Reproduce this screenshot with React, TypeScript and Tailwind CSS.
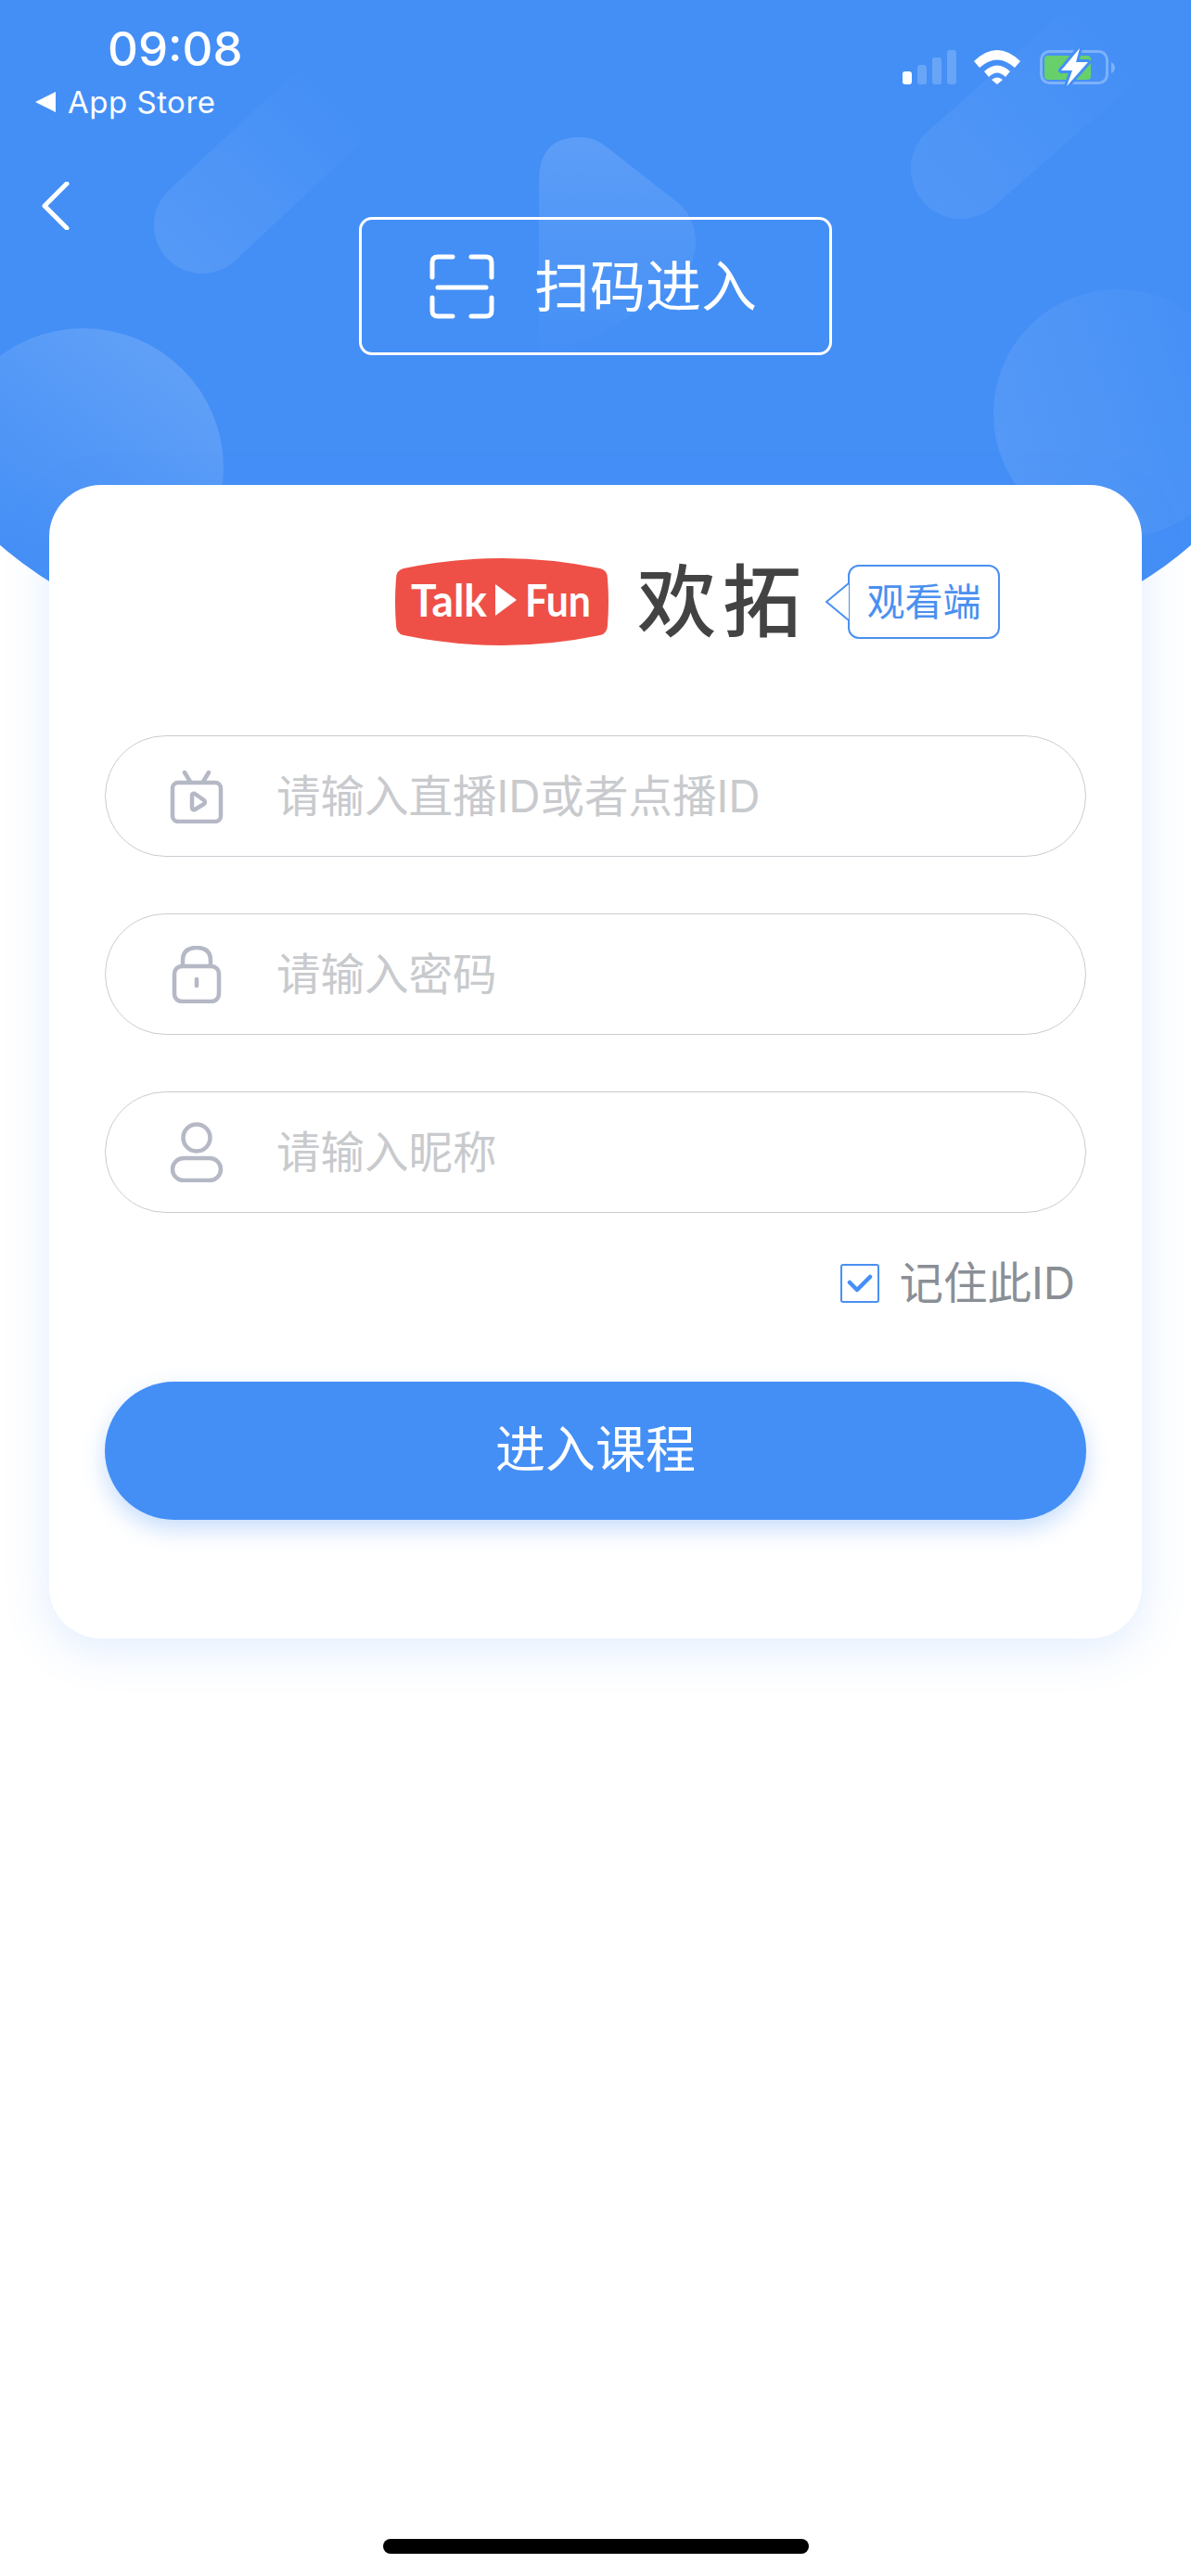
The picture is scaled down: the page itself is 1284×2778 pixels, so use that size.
import React from 'react'

const sans = "font-['Inter','Noto_Sans_CJK_SC',sans-serif]"

function HeaderBg() {
  return (
    <svg className="absolute left-0 top-0" width="1284" height="760" viewBox="0 0 1284 760">
      <defs>
        <linearGradient id="capLeft" gradientUnits="userSpaceOnUse" x1="190" y1="270" x2="360" y2="100">
          <stop offset="0" stopColor="#fff" stopOpacity="0.09" />
          <stop offset="1" stopColor="#fff" stopOpacity="0" />
        </linearGradient>
        <linearGradient id="capRight" gradientUnits="userSpaceOnUse" x1="1000" y1="215" x2="1200" y2="40">
          <stop offset="0" stopColor="#fff" stopOpacity="0.07" />
          <stop offset="1" stopColor="#fff" stopOpacity="0" />
        </linearGradient>
        <linearGradient id="tri" x1="0.5" y1="0" x2="0.5" y2="1">
          <stop offset="0" stopColor="#fff" stopOpacity="0.13" />
          <stop offset="1" stopColor="#fff" stopOpacity="0" />
        </linearGradient>
        <linearGradient id="circLeft" x1="0.8" y1="0.1" x2="0.25" y2="0.85">
          <stop offset="0" stopColor="#fff" stopOpacity="0.15" />
          <stop offset="1" stopColor="#fff" stopOpacity="0" />
        </linearGradient>
        <linearGradient id="circRight" x1="0" y1="0.6" x2="1" y2="0.3">
          <stop offset="0" stopColor="#fff" stopOpacity="0.09" />
          <stop offset="1" stopColor="#fff" stopOpacity="0" />
        </linearGradient>
        <clipPath id="dome">
          <ellipse cx="642" cy="443" rx="720" ry="320" />
          <rect x="-78" y="0" width="1440" height="443" />
        </clipPath>
      </defs>
      <g clipPath="url(#dome)">
        <rect width="1284" height="760" fill="#448ff6" />
        <circle cx="90" cy="505" r="151" fill="url(#circLeft)" />
        <circle cx="1205" cy="446" r="134" fill="url(#circRight)" />
        <path d="M218 243 L345 124" stroke="url(#capLeft)" strokeWidth="104" strokeLinecap="round" fill="none" />
        <path d="M1036 182 L1180 55" stroke="url(#capRight)" strokeWidth="108" strokeLinecap="round" fill="none" />
        <path d="M581 195 Q581 148 625 148 Q640 148 652 157 L735 222 Q750 238 750 262 Q750 290 718 317 L640 365 L581 385Z" fill="url(#tri)" />
      </g>
    </svg>
  )
}

function StatusIcons() {
  return (
    <svg className="overflow-visible" width="236" height="40" viewBox="0 0 236 40">
      <rect x="3" y="24" width="10" height="14" rx="3" fill="#fff" />
      <rect x="19" y="17" width="10" height="21" rx="3" fill="#fff" opacity="0.2" />
      <rect x="35" y="9" width="10" height="29" rx="3" fill="#fff" opacity="0.2" />
      <rect x="51" y="1" width="10" height="37" rx="3" fill="#fff" opacity="0.2" />
      <path d="M80 13 Q105 -11 130 13 L124 20 Q105 3 86 20Z" fill="#fff" />
      <path d="M91 24 Q105 11 119 24 L114 30 Q105 21 96 30Z" fill="#fff" />
      <path d="M99 33 Q105 28 111 33 L105 38Z" fill="#fff" />
      <rect x="152.5" y="2.5" width="71" height="34" rx="9" fill="none" stroke="#fff" strokeOpacity="0.3" strokeWidth="3" />
      <rect x="156" y="7" width="50" height="26" rx="4" fill="#67d06a" />
      <path d="M228 14 Q232 16 232 20 Q232 24 228 26Z" fill="#fff" opacity="0.3" />
      <path d="M194 -1 L174 23 L186 23 L180 40 L203 14 L190 14Z" fill="#fff" stroke="#448ff6" strokeWidth="6" strokeLinejoin="round" paintOrder="stroke" />
    </svg>
  )
}

function TvIcon() {
  return (
    <svg width="58" height="58" viewBox="0 0 58 58" fill="none" stroke="#b5b8c5" strokeWidth="4.5" strokeLinecap="round" strokeLinejoin="round">
      <rect x="3" y="14" width="52" height="42" rx="6" />
      <path d="M16 3 L22 13 M42 3 L36 13" />
      <path d="M24 28 Q24 25 27 26 L37 33 Q39 35 37 37 L27 43 Q24 44 24 41Z" />
    </svg>
  )
}

function LockIcon() {
  return (
    <svg width="58" height="62" viewBox="0 0 58 62" fill="none" stroke="#b5b8c5" strokeWidth="4.5" strokeLinecap="round" strokeLinejoin="round">
      <rect x="5" y="22" width="48" height="38" rx="8" />
      <path d="M14 22 V16 Q14 2 29 2 Q44 2 44 16 V22" />
      <path d="M29 36 V43" />
    </svg>
  )
}

function UserIcon() {
  return (
    <svg width="58" height="65" viewBox="0 0 58 65" fill="none" stroke="#b5b8c5" strokeWidth="4.5" strokeLinejoin="round">
      <circle cx="29" cy="17" r="14.5" />
      <rect x="3" y="39" width="52" height="24" rx="12" />
    </svg>
  )
}

function Field({ icon, text }: { icon: React.ReactNode; text: string }) {
  return (
    <div className="flex h-[131px] items-center rounded-full border border-[#c8ccd1] bg-white pl-[69px]">
      <div className="flex w-[58px] justify-center">{icon}</div>
      <span className="ml-[57px] text-[47.5px] leading-none text-[#c8cacd]">{text}</span>
    </div>
  )
}

function Logo() {
  return (
    <svg width="232" height="94" viewBox="0 0 232 94">
      <path d="M10 11 Q116 -11 222 11 Q230 13 230 22 Q232 47 230 72 Q230 81 222 83 Q116 105 10 83 Q2 81 2 72 Q0 47 2 22 Q2 13 10 11Z" fill="#ee5047" />
      <text x="18" y="63" fill="#fff" fontFamily="Lato, sans-serif" fontSize="48" fontWeight="700" textLength="82" lengthAdjust="spacingAndGlyphs">Talk</text>
      <path d="M109 28 L132 45 L109 62Z" fill="#fff" />
      <text x="141" y="63" fill="#fff" fontFamily="Lato, sans-serif" fontSize="48" fontWeight="700" textLength="71" lengthAdjust="spacingAndGlyphs">Fun</text>
    </svg>
  )
}

export default function App() {
  return (
    <div className={`relative h-[2778px] w-[1284px] overflow-hidden bg-white ${sans}`}>
      <HeaderBg />
      <div className="relative">
        {/* status bar */}
        <div className="flex h-[136px] items-start justify-between pl-[38px] pr-[78px]">
          <div>
            <div className="ml-[78px] mt-[23px] text-[51px] font-medium leading-[60px] text-white">09:08</div>
            <div className="mt-[7px] flex items-center gap-[13px] text-[33px] font-normal leading-[40px] tracking-[0.5px] text-white">
              <svg width="22" height="22" viewBox="0 0 22 22"><path d="M22 0 V22 L0 11Z" fill="#fff" /></svg>
              App Store
            </div>
          </div>
          <div className="mt-[53px]"><StatusIcons /></div>
        </div>

        {/* back + scan button */}
        <div className="pl-[45px] pt-[60px]">
          <svg width="30" height="52" viewBox="0 0 30 52" fill="none" stroke="#fff" strokeWidth="5" strokeLinecap="round" strokeLinejoin="round">
            <path d="M27 2 L3 26 L27 50" />
          </svg>
        </div>
        <div className="mx-auto -mt-[14px] flex h-[149px] w-[510px] items-center rounded-[14px] border-[3px] border-white pl-[73px]">
          <svg width="70" height="70" viewBox="0 0 70 70" fill="none" stroke="#fff" strokeWidth="5" strokeLinecap="round" strokeLinejoin="round">
            <path d="M3 25 V9 Q3 3 9 3 H25 M45 3 H61 Q67 3 67 9 V25 M3 47 V61 Q3 67 9 67 H25 M45 67 H61 Q67 67 67 61 V47 M9 36 H61" />
          </svg>
          <span className="ml-[43px] text-[60px] leading-none text-white">扫码进入</span>
        </div>

        {/* card */}
        <div className="mx-[53px] mt-[140px] h-[1244px] rounded-[56px] bg-white px-[60px] pt-[79px] shadow-[0_12px_50px_rgba(68,143,246,0.16)]">
          <div className="flex h-[94px] items-center pl-[312px]">
            <Logo />
            <span className="ml-[30px] text-[85px] font-medium leading-none tracking-[7px] text-[#434343]">欢拓</span>
            <div className="relative ml-[43px] flex h-[80px] w-[164px] items-center justify-center rounded-[12px] border-2 border-[#4a90f0] bg-white text-[41px] leading-none text-[#4a90f0]">
              观看端
              <svg className="absolute -left-[27px] top-[16px]" width="28" height="44" viewBox="0 0 28 44">
                <path d="M26 2 L2 22 L26 42" fill="#fff" stroke="#4a90f0" strokeWidth="2" />
              </svg>
            </div>
          </div>

          <div className="mt-[97px] flex flex-col gap-[61px]">
            <Field icon={<TvIcon />} text="请输入直播ID或者点播ID" />
            <Field icon={<LockIcon />} text="请输入密码" />
            <Field icon={<UserIcon />} text="请输入昵称" />
          </div>

          <div className="mt-[52px] flex items-center justify-end pr-[12px]">
            <div className="flex h-[42px] w-[42px] items-center justify-center rounded-[3px] border-2 border-[#4a90f0]">
              <svg width="28" height="22" viewBox="0 0 28 22" fill="none" stroke="#448ff6" strokeWidth="4.5" strokeLinecap="round" strokeLinejoin="round">
                <path d="M3 10 L11 18 L25 4" />
              </svg>
            </div>
            <span className="ml-[21px] text-[47.5px] leading-none text-[#8a8f96]">记住此ID</span>
          </div>

          <div className="mt-[82px] flex h-[149px] items-center justify-center rounded-full bg-[#448ff6] text-[54px] leading-none text-white shadow-[0_10px_24px_rgba(68,143,246,0.3)]">
            进入课程
          </div>
        </div>
      </div>

      {/* home indicator */}
      <div className="absolute bottom-[24px] left-[413px] h-[16px] w-[459px] rounded-full bg-black" />
    </div>
  )
}
